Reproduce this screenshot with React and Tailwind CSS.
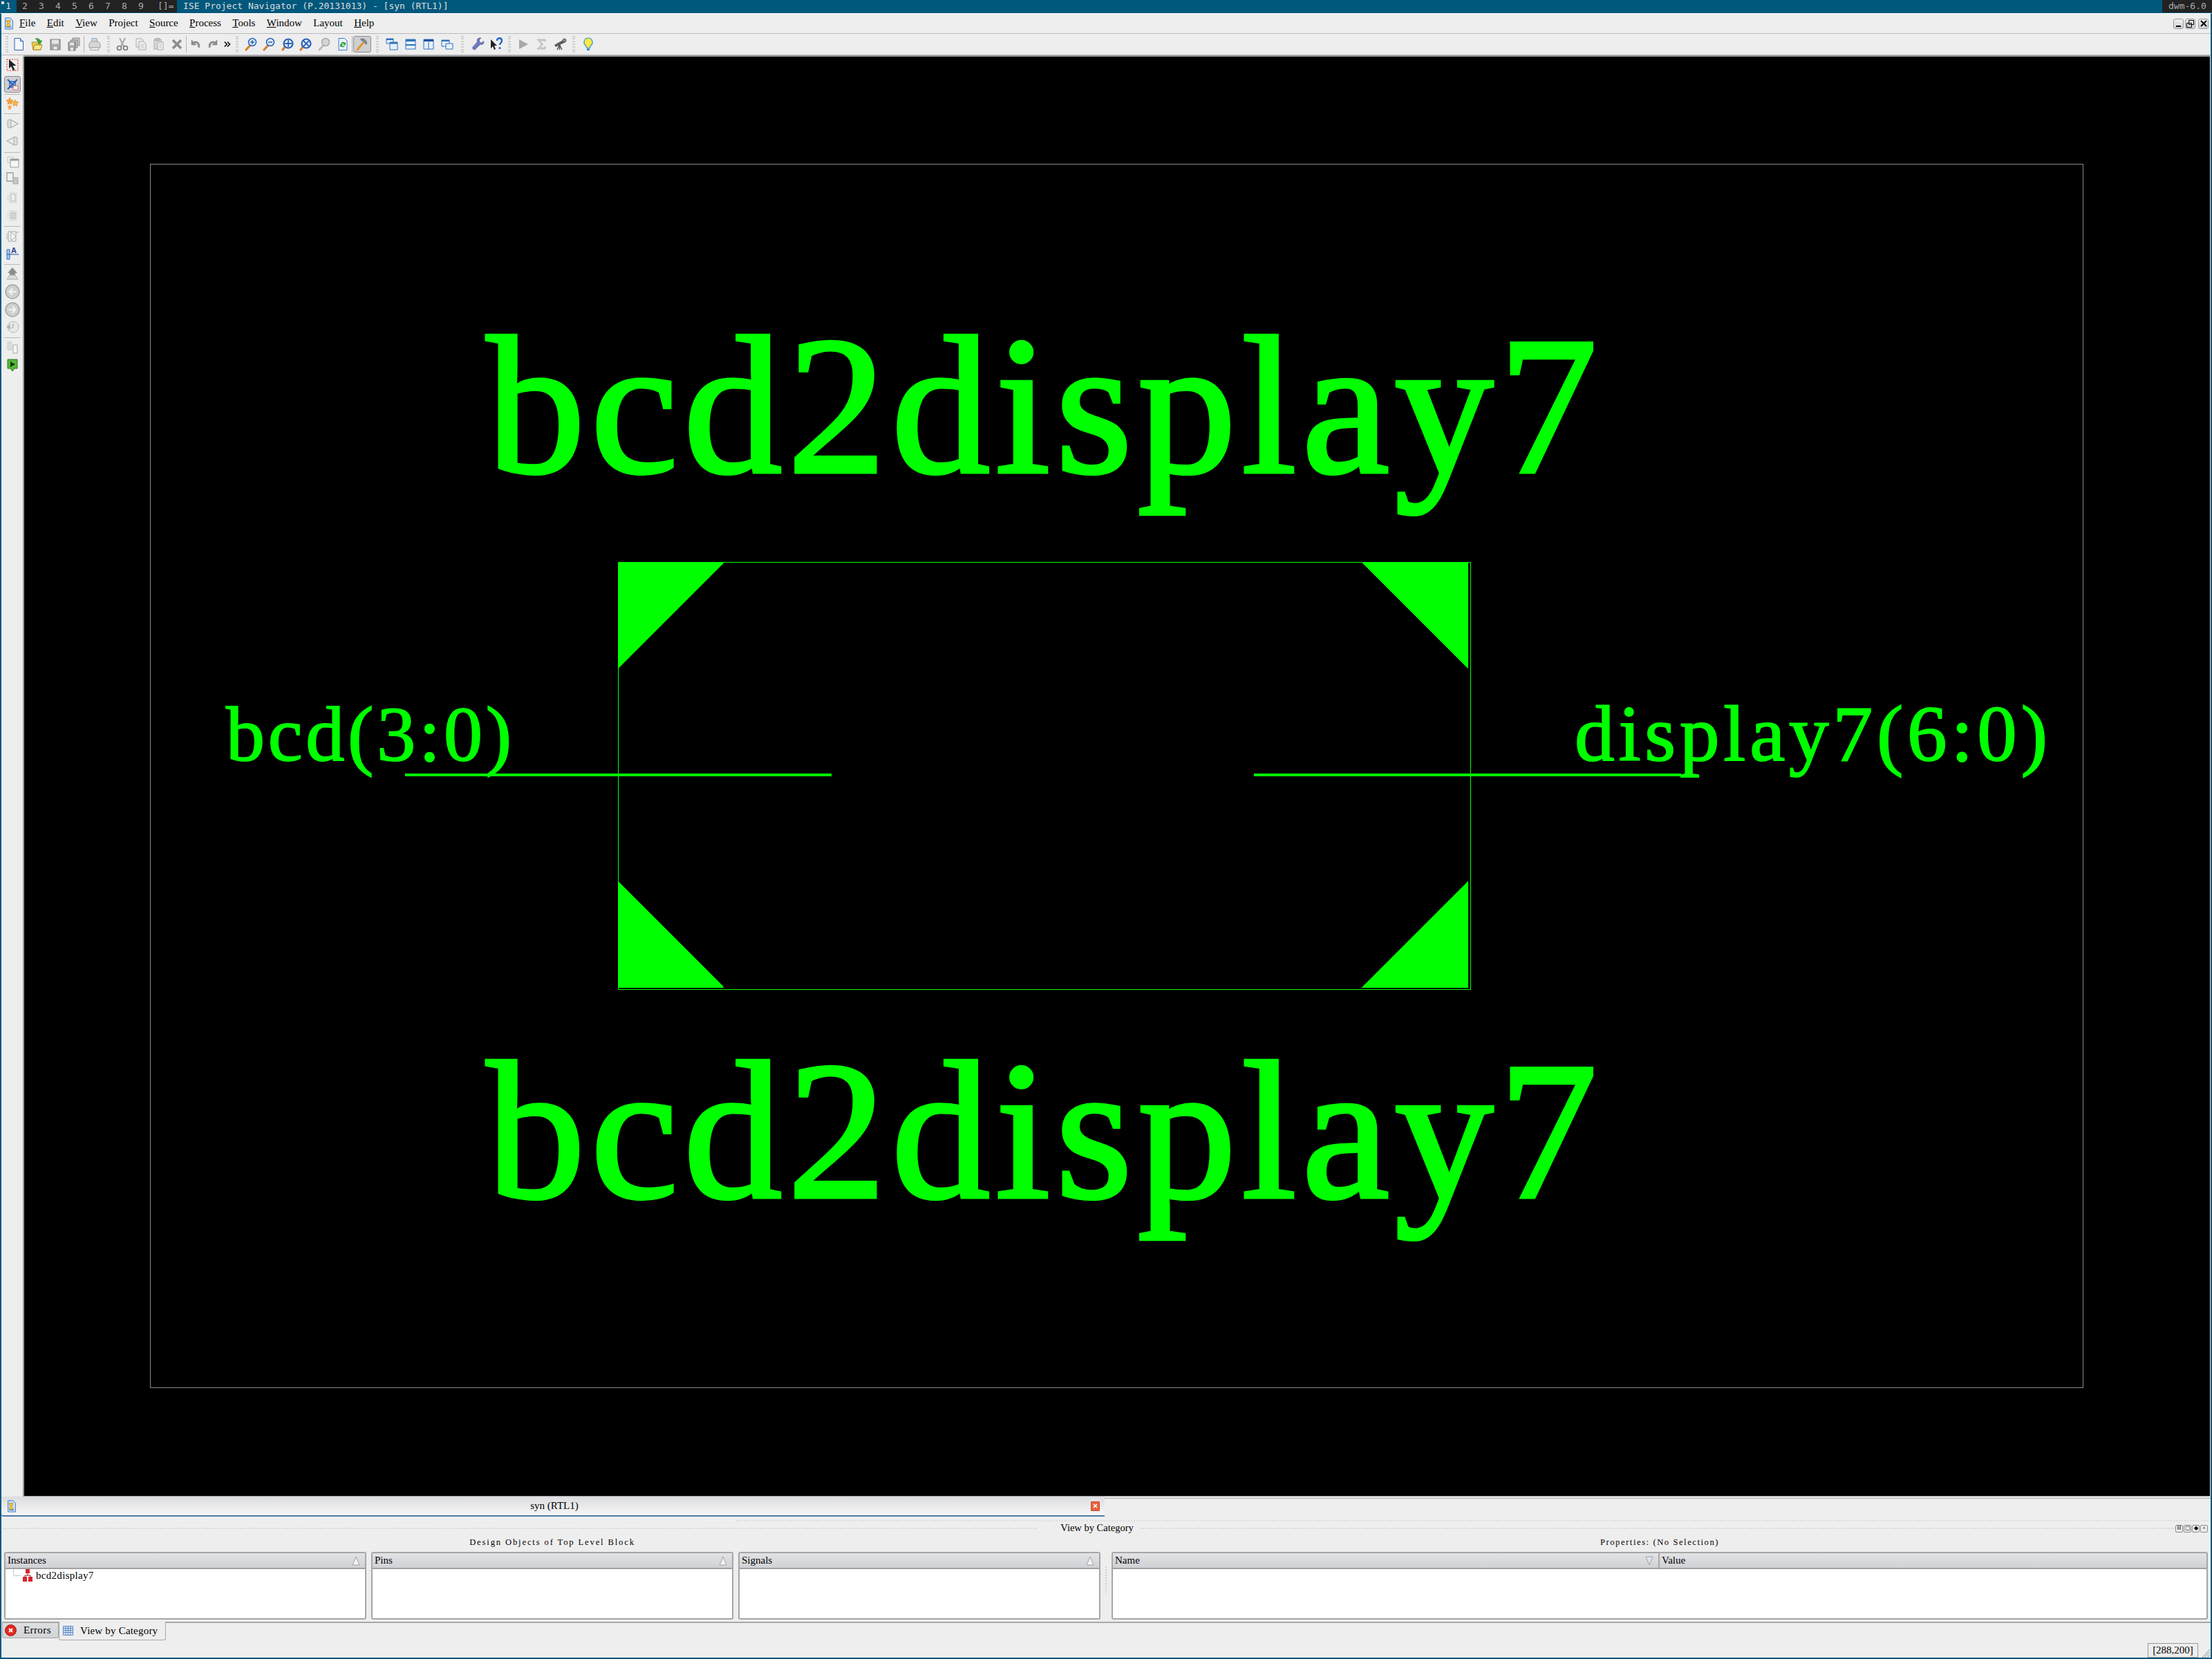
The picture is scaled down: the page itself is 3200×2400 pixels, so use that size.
import React from "react";

const serif = "font-['Liberation_Serif',serif]";

// small 20x20 toolbar drawings
function Ic({ children, size = 20 }) {
  return (
    <svg width={size} height={size} viewBox="0 0 20 20" className="block">
      {children}
    </svg>
  );
}

const DocIcon = () => (
  <Ic size={18}>
    <path d="M4 1h8l4 4v14H4z" fill="#cfe2f7" stroke="#2f6fc0" />
    <path d="M6 5h6v2l-2 3 2 3v2H6v-2l2-3-2-3z" fill="#f4c430" stroke="#8a6d20" strokeWidth=".6" />
    <path d="M6 16h8" stroke="#2f6fc0" />
  </Ic>
);
const NewIcon = () => (
  <Ic>
    <path d="M4 1.500h8.500l4 4V18.500H4z" fill="#f4f8fd" stroke="#2b62b5" />
    <path d="M12.500 1.500v4h4" fill="#bcd3ef" stroke="#2b62b5" />
  </Ic>
);
const OpenIcon = () => (
  <Ic>
    <path d="M2 7h6l1 2h6v9H4z" fill="#f2cf4e" stroke="#a98a1e" />
    <path d="M4 18l2-7h11l-2 7z" fill="#fbe68a" stroke="#a98a1e" />
    <path d="M7 2c4-1 6 0 7 3h3l-4 5-4-5h2c-1-1.500-2-2-4-3z" fill="#3aa535" stroke="#1f6e1b" strokeWidth=".6" />
  </Ic>
);
const SaveIcon = () => (
  <Ic>
    <path d="M3 3h14v15H3z" fill="#a9a9a9" stroke="#777" />
    <path d="M5 3.500h10v6H5z" fill="#e4e4e4" />
    <path d="M7 13h6v5H7z" fill="#e8e8e8" stroke="#888" strokeWidth=".6" />
  </Ic>
);
const SaveAllIcon = () => (
  <Ic>
    <path d="M8 1h10v11H8z" fill="#c7c7c7" stroke="#888" />
    <path d="M5 4h10v11H5z" fill="#bdbdbd" stroke="#888" />
    <path d="M2 7h10v12H2z" fill="#a5a5a5" stroke="#777" />
    <path d="M4 7.500h6v4H4z" fill="#e6e6e6" />
    <path d="M5 15h4v4H5z" fill="#e6e6e6" />
  </Ic>
);
const PrintIcon = () => (
  <Ic>
    <path d="M6 1.500h7l1 6H5z" fill="#c8d8ec" stroke="#9aa8b8" />
    <path d="M2 9l3-3h10l3 3v6H2z" fill="#d6d6d6" stroke="#9c9c9c" />
    <path d="M4 15h12v3.500H4z" fill="#ececec" stroke="#a5a5a5" />
  </Ic>
);
const CutIcon = () => (
  <Ic>
    <path d="M6 1l6 12M14 1L8 13" stroke="#a8a8a8" strokeWidth="2" fill="none" />
    <circle cx="5.500" cy="15.500" r="3" fill="none" stroke="#777" strokeWidth="1.600" />
    <circle cx="14.500" cy="15.500" r="3" fill="none" stroke="#777" strokeWidth="1.600" />
  </Ic>
);
const CopyIcon = () => (
  <Ic>
    <path d="M3 2h8l2 2v10H3z" fill="#eee" stroke="#aaa" />
    <path d="M7 6h7l3 3v9H7z" fill="#f4f4f4" stroke="#a2a2a2" />
    <path d="M9 10h6M9 12.500h6M9 15h6" stroke="#bbb" />
  </Ic>
);
const PasteIcon = () => (
  <Ic>
    <path d="M3 3h10v14H3z" fill="#d8d8d8" stroke="#aaa" />
    <path d="M5 1.500h6v3H5z" fill="#c4c4c4" stroke="#aaa" />
    <path d="M8 7h8v11H8z" fill="#f2f2f2" stroke="#a8a8a8" />
    <path d="M10 10h4M10 12.500h4M10 15h4" stroke="#bbb" />
  </Ic>
);
const DelIcon = () => (
  <Ic>
    <path d="M4 4l12 12M16 4L4 16" stroke="#8c8c8c" strokeWidth="3.600" />
  </Ic>
);
const UndoIcon = () => (
  <Ic>
    <path d="M4 4v7h7L8.500 8.500C11 7.500 14 9 13.500 14l2 1c2-6-3-11-8.500-8.500z" fill="#8f8f8f" stroke="#7a7a7a" strokeWidth=".5" />
  </Ic>
);
const RedoIcon = () => (
  <Ic>
    <path d="M16 4v7H9l2.500-2.500C9 7.500 6 9 6.500 14l-2 1C2.500 9 7.500 4 13 6.500z" fill="#8f8f8f" stroke="#7a7a7a" strokeWidth=".5" />
  </Ic>
);
const MoreIcon = () => (
  <Ic size={14}>
    <path d="M4 5l5 5-5 5M10 5l5 5-5 5" stroke="#111" strokeWidth="2.400" fill="none" />
  </Ic>
);
const handle = (
  <path d="M9 11.500L3 18" stroke="#d9822b" strokeWidth="3.200" strokeLinecap="round" />
);
const ZoomIn = () => (
  <Ic>
    {handle}
    <circle cx="12" cy="7" r="5.500" fill="#dbe9f8" stroke="#2b62b5" strokeWidth="1.500" />
    <path d="M9 7h6M12 4v6" stroke="#2b62b5" strokeWidth="1.500" />
  </Ic>
);
const ZoomOut = () => (
  <Ic>
    {handle}
    <circle cx="12" cy="7" r="5.500" fill="#dbe9f8" stroke="#2b62b5" strokeWidth="1.500" />
    <path d="M9 7h6" stroke="#2b62b5" strokeWidth="1.500" />
  </Ic>
);
const ZoomFit = ({ mark }) => (
  <Ic>
    <path d="M6 14l-3 4" stroke="#d9822b" strokeWidth="3.200" strokeLinecap="round" />
    <circle cx="11" cy="9" r="6.500" fill="#e4eefa" stroke="#2b62b5" strokeWidth="2.200" />
    <path d={mark} stroke="#2b62b5" strokeWidth="1.800" fill="none" />
  </Ic>
);
const ZoomGray = () => (
  <Ic>
    <path d="M9 11.500L3 18" stroke="#bdbdbd" strokeWidth="3" strokeLinecap="round" />
    <circle cx="12" cy="7" r="5.500" fill="#d5d5d5" stroke="#a8a8a8" strokeWidth="1.500" />
  </Ic>
);
const RefreshIcon = () => (
  <Ic>
    <path d="M4 1.500h8.500l3.500 3.500v13.500H4z" fill="#e9f2fb" stroke="#3d7cc4" />
    <path d="M7 9a3.500 3.500 0 0 1 6-1l1-1v4h-4l1.500-1.500A2 2 0 0 0 8.500 10z" fill="#2f9e35" />
    <path d="M13 12a3.500 3.500 0 0 1-6 1l-1 1v-4h4l-1.500 1.500a2 2 0 0 0 3 .5z" fill="#2f9e35" />
  </Ic>
);
const HammerIcon = () => (
  <Ic>
    <path d="M3 18L12 7" stroke="#dc9a2d" strokeWidth="3" strokeLinecap="round" />
    <path d="M8 2c4-1 8 2 9 7l-2 1c-1-3-4-5-7-6z" fill="#7d8796" stroke="#5b6470" strokeWidth=".6" />
  </Ic>
);
const WinsA = () => (
  <Ic>
    <path d="M2 2h10v7H2z" fill="#e6f0fb" stroke="#2f73bb" />
    <path d="M2 2h10v2H2z" fill="#2f73bb" />
    <path d="M7 7h11v11H7z" fill="#e6f0fb" stroke="#2f73bb" />
    <path d="M7 7h11v2.500H7z" fill="#2f73bb" />
  </Ic>
);
const WinsB = () => (
  <Ic>
    <path d="M3 3h14v14H3z" fill="#e6f0fb" stroke="#2f73bb" />
    <path d="M3 3h14v3H3zM3 10h14v2H3z" fill="#2f73bb" />
  </Ic>
);
const WinsC = () => (
  <Ic>
    <path d="M3 3h14v14H3z" fill="#e6f0fb" stroke="#2f73bb" />
    <path d="M3 3h14v3H3z" fill="#1d4f9a" />
    <path d="M10 3v14" stroke="#2f73bb" />
  </Ic>
);
const WinsD = () => (
  <Ic>
    <path d="M2 4h11v9H2z" fill="#e6f0fb" stroke="#2f73bb" />
    <path d="M2 4h11v2H2z" fill="#2f73bb" />
    <path d="M8 9h10v8H8z" fill="#e6f0fb" stroke="#2f73bb" />
  </Ic>
);
const WrenchIcon = () => (
  <Ic>
    <path d="M17.500 5.500l-3 2.500-3-1.500V3.500L14 1c-4-1-7 2-5.500 5.500L2 14c-1.500 2 1.500 5 3.500 3.500L13 10c3 1.500 6-1 4.500-4.500z" fill="#6d7bc0" stroke="#4a5590" strokeWidth=".6" />
  </Ic>
);
const HelpIcon = () => (
  <Ic>
    <path d="M2 3v13l3-3 2 5 2-1-2-5h4z" fill="#222" />
    <path d="M11 5c0-5 7-5 7 0 0 3-3 3-3 6" fill="none" stroke="#2566c4" strokeWidth="2.400" />
    <circle cx="15" cy="15.500" r="1.600" fill="#2566c4" />
  </Ic>
);
const PlayIcon = () => (
  <Ic>
    <path d="M4 3l13 7-13 7z" fill="#a8a8a8" />
  </Ic>
);
const SigmaIcon = () => (
  <Ic>
    <path d="M4 3h12v3h-1L14 5H8l5 5-5 5h6l1-1.500h1V17H4l6-7z" fill="#d2d2d2" stroke="#a2a2a2" strokeWidth=".6" />
  </Ic>
);
const ScopeIcon = () => (
  <Ic>
    <path d="M2 11L16 3l2 4-14 7z" fill="#5c5c5c" />
    <circle cx="16.500" cy="4.500" r="2.500" fill="#8a8a8a" stroke="#555" />
    <path d="M9.500 11L6 18M9.500 11L13 18M9.500 11v7" stroke="#555" strokeWidth="1.500" />
  </Ic>
);
const BulbIcon = () => (
  <Ic>
    <path d="M10 1a6 6 0 0 0-4 10.500c1 1 1.500 2 1.500 3.500h5c0-1.500.5-2.500 1.500-3.500A6 6 0 0 0 10 1z" fill="#fde93f" stroke="#2f8fd6" strokeWidth="1.200" />
    <path d="M8 16h4v3H8z" fill="#2f8fd6" />
  </Ic>
);

// left column drawings
const SelectIcon = () => (
  <Ic>
    <path d="M2 2h16v16H2z" fill="none" stroke="#e02020" strokeDasharray="2 1.500" />
    <path d="M5 2v13l3-3 3 6 2.500-1-3-6h5z" fill="#222" />
  </Ic>
);
const RouteIcon = () => (
  <Ic>
    <path d="M3 3l14 14M17 3L3 17" stroke="#1f5fb8" strokeWidth="1.800" />
    <path d="M6 6h8v8H6z" fill="none" stroke="#1f5fb8" strokeWidth="1.400" />
    <path d="M11 12h7v6h-7z" fill="#eee" stroke="#e02020" strokeDasharray="1.500 1" />
  </Ic>
);
const StarsIcon = () => (
  <Ic>
    <path d="M6 1l1.500 3.500L11 5 8.500 7.500 9 11 6 9.500 3 11l.5-3.500L1 5l3.500-.5z" fill="#f5a23b" stroke="#d97a18" strokeWidth=".5" />
    <path d="M14 4l1.500 3 3.500.5-2.500 2.500.5 3.500-3-1.500-3 1.500.5-3.500L9 7.500l3.500-.5z" fill="#f7b44a" stroke="#d97a18" strokeWidth=".5" />
    <path d="M6 11l1 2.500 2.500.5-2 2 .5 3L6 17.500 4 19l.5-3-2-2 2.500-.5z" fill="#f5a23b" />
  </Ic>
);
const PinR = () => (
  <Ic>
    <path d="M7 4l11 6-11 6" fill="none" stroke="#bbb" strokeWidth="1.500" />
    <rect x="3" y="4" width="5" height="12" rx="2.500" fill="#ddd" stroke="#aaa" />
  </Ic>
);
const PinL = () => (
  <Ic>
    <path d="M13 4L2 10l11 6" fill="none" stroke="#bbb" strokeWidth="1.500" />
    <rect x="12" y="4" width="5" height="12" rx="2.500" fill="#ddd" stroke="#aaa" />
  </Ic>
);
const ChipWin = () => (
  <Ic>
    <path d="M3 3h8v8H3z" fill="#eee" stroke="#aaa" strokeDasharray="1.500 1" />
    <path d="M7 6h12v12H7z" fill="#f5f5f5" stroke="#9b9b9b" />
    <path d="M7 6h12v2.500H7z" fill="#9b9b9b" />
  </Ic>
);
const Boxes = () => (
  <Ic>
    <path d="M2 2h9v12H2z" fill="#f2f2f2" stroke="#999" strokeWidth="1.300" />
    <path d="M11 9h7v9h-7z" fill="#c5c5c5" stroke="#aaa" />
  </Ic>
);
const ChipA = () => (
  <Ic>
    <path d="M5 2h12v16H5z" fill="#e2e2e2" />
    <path d="M8 5h6v10H8z" fill="#eee" stroke="#bbb" />
    <path d="M2 7h3M2 10h3M2 13h3" stroke="#ccc" />
  </Ic>
);
const ChipB = () => (
  <Ic>
    <path d="M5 2h12v16H5z" fill="#e2e2e2" />
    <path d="M8 6h6v8H8z" fill="#d6d6d6" stroke="#bbb" />
    <path d="M2 7h3M2 10h3M2 13h3" stroke="#ccc" />
  </Ic>
);
const BlockArrow = () => (
  <Ic>
    <path d="M4 3h11v14H4z" fill="#eee" stroke="#aaa" />
    <path d="M8 4l7 6-7 6z" fill="#fafafa" stroke="#aaa" />
    <path d="M1 7h3M1 10h3M1 13h3M15 4h4" stroke="#aaa" />
  </Ic>
);
const LabelA = () => (
  <Ic>
    <path d="M2 5h4v14H2z" fill="#a9c9ef" stroke="#2f6fc0" />
    <path d="M2 12h17" stroke="#1f4f9a" />
    <text x="8" y="10" fontSize="11" fontWeight="bold" fill="#1f3f8a" fontFamily="Liberation Sans">A</text>
  </Ic>
);
const UpHome = () => (
  <Ic>
    <path d="M10 1l7 8h-3v4H6V9H3z" fill="#8d8d8d" />
    <path d="M2 18l4-6h8l4 6z" fill="#dcdcdc" stroke="#aaa" />
  </Ic>
);
const RoundL = () => (
  <Ic size={22}>
    <circle cx="10" cy="10" r="9" fill="#d0d0d0" stroke="#a5a5a5" strokeWidth="1.400" />
    <path d="M15 10H6M10 6l-4 4 4 4" stroke="#f2f2f2" strokeWidth="2" fill="none" />
  </Ic>
);
const RoundR = () => (
  <Ic size={22}>
    <circle cx="10" cy="10" r="9" fill="#d0d0d0" stroke="#a5a5a5" strokeWidth="1.400" />
    <path d="M5 10h9M10 6l4 4-4 4" stroke="#f2f2f2" strokeWidth="2" fill="none" />
  </Ic>
);
const Clock = () => (
  <Ic>
    <circle cx="11" cy="10" r="8" fill="#e8e8e8" stroke="#bbb" />
    <path d="M11 5v5l-3 2" stroke="#999" fill="none" />
    <path d="M1 10l6-4v8z" fill="#b5b5b5" />
  </Ic>
);
const TwoBoxes = () => (
  <Ic>
    <path d="M3 2h6v11H3z" fill="#ddd" stroke="#ccc" />
    <path d="M11 6h6v12h-6z" fill="#f5f5f5" stroke="#aaa" />
  </Ic>
);
const Marker = () => (
  <Ic>
    <path d="M3 2h14v13h-4l-3 4-3-4H3z" fill="#55b83a" stroke="#2f7a20" />
    <path d="M7 5l7 4-7 4z" fill="#0e3d0a" />
  </Ic>
);

function Tool({ children, className = "w-[26.6px]" }) {
  return <div className={"flex h-full shrink-0 items-center justify-center " + className}>{children}</div>;
}
const Grip = ({ className }) => <div className={"h-[24px] shrink-0 w-[4px] border-x-2 border-dotted border-[#cfcfcf] " + className} />;
const Bar = ({ className = "" }) => <div className={"h-[24px] w-[1px] shrink-0 bg-[#b5b5b5] " + className} />;

function WinBtn({ children }) {
  return (
    <div className="flex h-[15px] w-[15px] items-center justify-center rounded-[3px] border border-[#9a9a9a] bg-gradient-to-b from-[#f0f0f2] to-[#cfd0d6]">
      {children}
    </div>
  );
}

function Side({ children, className = "", active }) {
  return (
    <div className={"mx-auto flex h-[24px] w-[24px] shrink-0 items-center justify-center " + (active ? "rounded-[3px] border border-[#8d8d8d] bg-[#cfcfd2] " : "") + className}>
      {children}
    </div>
  );
}
const SideSep = ({ className }) => <div className={"mx-[4px] h-[1px] shrink-0 bg-[#b8b8b8] " + className} />;

function SortUp() {
  return (
    <svg width="14" height="14" viewBox="0 0 14 14" className="shrink-0">
      <path d="M7 1L2 13h10z" fill="#f2f2f4" stroke="#a0a0a6" />
    </svg>
  );
}
function SortDown() {
  return (
    <svg width="14" height="14" viewBox="0 0 14 14" className="shrink-0">
      <path d="M7 13L2 1h10z" fill="#e4e4e8" stroke="#a0a0a6" />
    </svg>
  );
}

function Panel({ title, children }) {
  return (
    <div className="min-w-0 flex-1 overflow-hidden rounded-[3px] border-2 border-[#a6a6a6] bg-white">
      <div className="flex h-[23px] items-center justify-between border-b-2 border-[#a0a0a0] bg-gradient-to-b from-[#e2e3e7] to-[#d0d1d5] pl-[3px] pr-[6px] text-[15px] text-black">
        <span>{title}</span>
        <SortUp />
      </div>
      {children}
    </div>
  );
}

function App() {
  return (
    <div className={"flex h-[2400px] w-[3200px] flex-col overflow-hidden bg-[#eeeeee] text-black " + serif}>
      {/* dwm bar */}
      <div className="flex h-[19px] shrink-0 items-start bg-[#00587c] font-['DejaVu_Sans_Mono',monospace] text-[13px] leading-[18px]">
        <div className="relative h-[18px] w-[24px] pl-[8px] text-[#dddddd]">
          <div className="absolute left-[2px] top-[2px] h-[4px] w-[4px] bg-[#dddddd]" />
          1
        </div>
        <div className="flex h-[18px] w-[232px] bg-[#222222] text-[#aaaaaa]">
          {["2", "3", "4", "5", "6", "7", "8", "9"].map((t) => (
            <span key={t} className="w-[24px] pl-[8px]">{t}</span>
          ))}
          <span className="pl-[12px]">[]=</span>
        </div>
        <div className="flex-1 pl-[9px] text-[#dddddd]">ISE Project Navigator (P.20131013) - [syn (RTL1)]</div>
        <div className="h-[18px] w-[72px] bg-[#222222] pl-[9px] text-[#aaaaaa]">dwm-6.0</div>
      </div>

      <div className="flex min-h-0 flex-1 flex-col border-x-2 border-b-2 border-t border-[#00587c] border-t-white">
        {/* menu */}
        <div className="flex h-[29px] shrink-0 items-center border-b border-[#b8b8b8] text-[15px]">
          <div className="ml-[2px] w-[24px]"><DocIcon /></div>
          <div className="flex gap-[16.400px] pb-[1px]">
            <span><u>F</u>ile</span>
            <span><u>E</u>dit</span>
            <span><u>V</u>iew</span>
            <span>Pro<u>j</u>ect</span>
            <span><u>S</u>ource</span>
            <span><u>P</u>rocess</span>
            <span><u>T</u>ools</span>
            <span><u>W</u>indow</span>
            <span>Layout</span>
            <span><u>H</u>elp</span>
          </div>
          <div className="ml-auto mr-[3px] flex gap-[2px]">
            <WinBtn>
              <div className="mt-[7px] h-[2px] w-[7px] bg-black" />
            </WinBtn>
            <WinBtn>
              <svg width="11" height="11" viewBox="0 0 11 11">
                <path d="M3.500.5h7v6h-7zM.5 4.500h7v6h-7z" fill="none" stroke="#000" />
              </svg>
            </WinBtn>
            <div className="ml-[2px]">
              <WinBtn>
                <svg width="10" height="10" viewBox="0 0 10 10">
                  <path d="M1 1l8 8M9 1L1 9" stroke="#000" strokeWidth="2" />
                </svg>
              </WinBtn>
            </div>
          </div>
        </div>

        {/* main toolbar */}
        <div className="flex h-[31px] shrink-0 items-center border-b border-[#b8b8b8] pl-[6px]">
          <Grip className="mr-[2px]" />
          <Tool><NewIcon /></Tool>
          <Tool><OpenIcon /></Tool>
          <Tool><SaveIcon /></Tool>
          <Tool><SaveAllIcon /></Tool>
          <Bar className="mx-[1px]" />
          <Tool><PrintIcon /></Tool>
          <Grip className="mx-[5px]" />
          <Tool><CutIcon /></Tool>
          <Tool><CopyIcon /></Tool>
          <Tool><PasteIcon /></Tool>
          <Tool className="w-[24px]"><DelIcon /></Tool>
          <Bar className="mx-[1px]" />
          <Tool className="w-[24px]"><UndoIcon /></Tool>
          <Tool><RedoIcon /></Tool>
          <Tool className="w-[16px]"><MoreIcon /></Tool>
          <Grip className="mx-[4px]" />
          <Tool><ZoomIn /></Tool>
          <Tool><ZoomOut /></Tool>
          <Tool><ZoomFit mark="M11 4v10M6 9h10" /></Tool>
          <Tool><ZoomFit mark="M7 5l8 8M15 5l-8 8" /></Tool>
          <Tool><ZoomGray /></Tool>
          <Tool><RefreshIcon /></Tool>
          <Bar />
          <Tool className="w-[28px]">
            <div className="flex h-[24px] w-[26px] items-center justify-center rounded-[3px] border border-[#8d8d8d] bg-[#cfcfd2]"><HammerIcon /></div>
          </Tool>
          <Grip className="mx-[6px]" />
          <Tool><WinsA /></Tool>
          <Tool><WinsB /></Tool>
          <Tool><WinsC /></Tool>
          <Tool><WinsD /></Tool>
          <Grip className="mx-[7px]" />
          <Tool><WrenchIcon /></Tool>
          <Tool><HelpIcon /></Tool>
          <Grip className="mx-[4px]" />
          <Tool><PlayIcon /></Tool>
          <Tool><SigmaIcon /></Tool>
          <Tool><ScopeIcon /></Tool>
          <Grip className="mx-[5px]" />
          <Tool><BulbIcon /></Tool>
        </div>

        {/* side toolbar and schematic */}
        <div className="flex min-h-0 flex-1">
          <div className="flex w-[31px] shrink-0 flex-col">
            <Side className="mt-[2px]"><SelectIcon /></Side>
            <Side active className="mt-[4px]"><RouteIcon /></Side>
            <SideSep className="mt-[2px]" />
            <Side className="mt-[1px]"><StarsIcon /></Side>
            <SideSep className="mt-[2px]" />
            <Side className="mt-[2px]"><PinR /></Side>
            <Side className="mt-[1px]"><PinL /></Side>
            <SideSep className="mt-[4px]" />
            <Side className="mt-[1px]"><ChipWin /></Side>
            <Side><Boxes /></Side>
            <Side className="mt-[4px]"><ChipA /></Side>
            <Side className="mt-[2px]"><ChipB /></Side>
            <SideSep className="mt-[3px]" />
            <Side className="mt-[2px]"><BlockArrow /></Side>
            <Side><LabelA /></Side>
            <SideSep className="mt-[4px]" />
            <Side className="mt-[1px]"><UpHome /></Side>
            <Side className="mt-[2px]"><RoundL /></Side>
            <Side className="mt-[2px]"><RoundR /></Side>
            <Side className="mt-[1px]"><Clock /></Side>
            <SideSep className="mt-[3px]" />
            <Side className="mt-[2px]"><TwoBoxes /></Side>
            <Side className="mt-[1px]"><Marker /></Side>
          </div>

          <div className="relative mr-[1px] min-w-0 flex-1 overflow-hidden rounded-tl-[3px] border-b border-l-2 border-t-2 border-[#9a9a9a] bg-black text-[#00ff00]">
            <svg className="absolute inset-0 h-full w-full" viewBox="35 82 3162 2082" shapeRendering="crispEdges">
              <rect x="217.500" y="237.500" width="2796" height="1770" fill="none" stroke="#888888" />
              <rect x="894.500" y="813.500" width="1233" height="618" fill="none" stroke="#00ff00" />
              <path d="M894 813h154L894 967z" fill="#00ff00" />
              <path d="M1969 813h155v154z" fill="#00ff00" />
              <path d="M894 1274l154 155H894z" fill="#00ff00" />
              <path d="M2124 1274v155H1969z" fill="#00ff00" />
              <rect x="586" y="1119" width="617" height="4" fill="#00ff00" />
              <rect x="1814" y="1119" width="618" height="4" fill="#00ff00" />
            </svg>
            <div className="absolute left-[669px] top-[363px] whitespace-nowrap text-[285px] leading-none tracking-[7.900px] [-webkit-text-stroke:5px_#00ff00]">bcd2display7</div>
            <div className="absolute left-[669px] top-[1412px] whitespace-nowrap text-[285px] leading-none tracking-[7.900px] [-webkit-text-stroke:5px_#00ff00]">bcd2display7</div>
            <div className="absolute left-[292px] top-[924px] whitespace-nowrap text-[112px] leading-none tracking-[4.800px] [-webkit-text-stroke:2px_#00ff00]">bcd(3:0)</div>
            <div className="absolute left-[2243px] top-[922px] whitespace-nowrap text-[115px] leading-none tracking-[5.900px] [-webkit-text-stroke:2px_#00ff00]">display7(6:0)</div>
          </div>
        </div>

        {/* lower panes */}
        <div className="flex h-[233px] shrink-0 flex-col">
          {/* document tab */}
          <div className="flex h-[29px] shrink-0">
            <div className="flex w-[1596px] items-center rounded-bl-[3px] border-b-2 border-[#4f7aa6] bg-gradient-to-b from-[#dcdde0] to-[#f6f6f6] text-[15px]">
              <div className="ml-[6px] w-[20px]"><DocIcon /></div>
              <div className="flex-1 pr-[2px] text-center">syn (RTL1)</div>
              <div className="mr-[7px] flex h-[14px] w-[13px] items-center justify-center rounded-[1px] border border-[#c94a2a] bg-[#e8623f]">
                <svg width="7" height="7" viewBox="0 0 7 7">
                  <path d="M1 1l5 5M6 1L1 6" stroke="#fff" strokeWidth="1.600" />
                </svg>
              </div>
            </div>
            <div className="mt-[2px] flex-1 border-t border-[#a8a8a8]" />
          </div>

          <div className="ml-[1063px] mt-[5px] h-[2px] shrink-0 border-t-2 border-dotted border-[#dcdcdc]" />

          {/* View by Category header */}
          <div className="flex h-[20px] shrink-0 items-center pl-[2px] pr-[4px] text-[14.500px]">
            <div className="h-[2px] flex-1 border-t-2 border-dotted border-[#d8d8d8]" />
            <div className="pl-[34px] pr-[10px]">View by Category</div>
            <div className="h-[2px] flex-1 border-t-2 border-dotted border-[#d8d8d8]" />
            <div className="ml-[1px] flex gap-[1px]">
              {["H", "▢", "◆", "×"].map((g) => (
                <div key={g} className="flex h-[11px] w-[11px] items-center justify-center rounded-[2px] border border-[#888888] text-[8px] leading-none">{g}</div>
              ))}
            </div>
          </div>

          {/* object tables */}
          <div className="flex shrink-0 px-[4px]">
            <div className="min-w-0 flex-1">
              <div className="flex h-[20px] items-center justify-center text-[12.500px] tracking-[1.900px]">Design Objects of Top Level Block</div>
              <div className="mt-[4px] flex h-[98px] gap-[7px]">
                <Panel title="Instances">
                  <div className="flex h-[18px] items-center text-[15px]">
                    <svg width="46" height="20" viewBox="0 0 46 20" className="shrink-0">
                      <path d="M11.500 2v8.500H23" fill="none" stroke="#888" strokeDasharray="1 1" />
                      <path d="M29 1h6v6h-6zM25 12h6v7h-6zM33 12h6v7h-6z" fill="#d9252b" />
                      <path d="M32 7v3M28 12v-2h8v2" fill="none" stroke="#8a1a1e" />
                    </svg>
                    <span className="ml-[-2px] tracking-[.3px]">bcd2display7</span>
                  </div>
                </Panel>
                <Panel title="Pins" />
                <Panel title="Signals" />
              </div>
            </div>
            <div className="flex w-[16px] shrink-0 justify-center pt-[45px]">
              <div className="h-[38px] w-[2px] border-l-2 border-dotted border-[#d0d0d0]" />
            </div>
            <div className="min-w-0 flex-1">
              <div className="flex h-[20px] items-center justify-center text-[12.500px] tracking-[1.600px]">Properties: (No Selection)</div>
              <div className="mt-[4px] h-[98px] overflow-hidden rounded-[3px] border-2 border-[#a6a6a6] bg-white">
                <div className="flex h-[23px] border-b-2 border-[#a0a0a0] bg-gradient-to-b from-[#e2e3e7] to-[#d0d1d5] text-[15px]">
                  <div className="flex w-[791px] items-center justify-between border-r-2 border-[#a8a8a8] pl-[3px] pr-[6px]">
                    <span>Name</span>
                    <SortDown />
                  </div>
                  <div className="flex items-center pl-[3px]">Value</div>
                </div>
              </div>
            </div>
          </div>

          {/* bottom tabs */}
          <div className="mt-[3px] flex h-[27px] shrink-0 items-start text-[15px]">
            <div className="ml-[1px] flex h-[24px] w-[82px] items-center gap-[4px] rounded-b-[3px] border-x border-b border-t-2 border-[#a8a8a8] bg-gradient-to-b from-[#dedfe2] to-[#d2d3d6] pl-[3px]">
              <svg width="17" height="17" viewBox="0 0 17 17" className="shrink-0">
                <circle cx="8.500" cy="8.500" r="8" fill="#e0291f" stroke="#a81a12" />
                <path d="M6 6l5 5M11 6l-5 5" stroke="#fff" strokeWidth="2" />
              </svg>
              <span className="ml-[6px] tracking-[.4px]">Errors</span>
            </div>
            <div className="flex h-[27px] w-[155px] items-center rounded-b-[3px] border-x border-b border-[#a8a8a8] pl-[5px]">
              <svg width="15" height="16" viewBox="0 0 15 16" className="shrink-0">
                <path d="M.5 1.500h14v13H.5z" fill="#dbe7f6" stroke="#5a86c4" />
                <path d="M.5 4.500h14M.5 7.500h14M.5 10.500h14M4 1.500v13M7.500 1.500v13M11 1.500v13" stroke="#5a86c4" />
              </svg>
              <span className="ml-[10px] whitespace-nowrap tracking-[.2px]">View by Category</span>
            </div>
            <div className="h-[2px] flex-1 bg-[#a8a8a8]" />
          </div>

          {/* status */}
          <div className="flex flex-1 items-end justify-end">
            <div className="flex h-[21px] w-[73px] items-center justify-center border border-[#9a9a9a] text-[15px]">[288,200]</div>
            <svg width="18" height="14" viewBox="0 0 18 14">
              <path d="M17 2L6 14M17 6l-8 8M17 10l-4 4" stroke="#8a8a8a" fill="none" />
            </svg>
          </div>
        </div>
      </div>
    </div>
  );
}

export default App;
